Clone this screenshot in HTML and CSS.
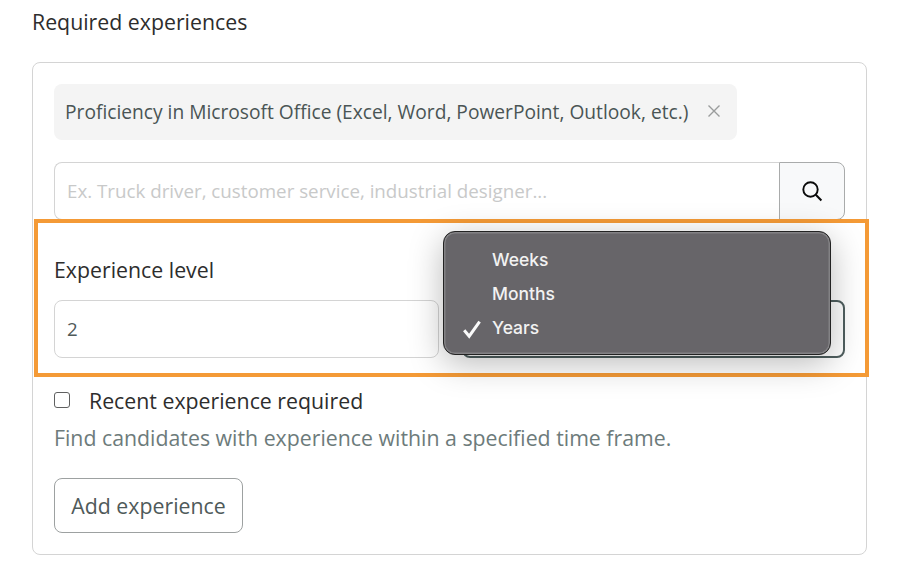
FILE: index.html
```html
<!DOCTYPE html>
<html lang="en">
<head>
<meta charset="utf-8">
<title>Required experiences</title>
<link rel="stylesheet" href="styles.css">
</head>
<body>
<main class="page">
  <h2 class="title">Required experiences</h2>
  <section class="card">
    <div class="highlight"></div>
    <div class="chip">
      <span class="chip-text">Proficiency in Microsoft Office (Excel, Word, PowerPoint, Outlook, etc.)</span>
      <svg class="chip-x" width="14" height="14" viewBox="0 0 14 14"><path d="M1.5 1.5l11 11M12.5 1.5l-11 11" fill="none" stroke="#9a9c9c" stroke-width="1.4"/></svg>
    </div>
    <div class="search">
      <div class="search-input">Ex. Truck driver, customer service, industrial designer...</div>
      <div class="search-btn">
        <svg width="24" height="24" viewBox="0 0 24 24"><circle cx="10.5" cy="10.5" r="7.2" fill="none" stroke="#0b0b0b" stroke-width="1.9"/><path d="M15.8 15.8l5.6 5.6" fill="none" stroke="#0b0b0b" stroke-width="2.1"/></svg>
      </div>
    </div>
    <div class="level-label">Experience level</div>
    <div class="level-row">
      <div class="level-input">2</div>
      <div class="level-select"></div>
      <div class="menu">
        <div class="menu-item">Weeks</div>
        <div class="menu-item">Months</div>
        <div class="menu-item">
          <svg class="menu-check" width="20" height="20" viewBox="0 0 20 20"><path d="M2.2 11.2l5 6L17.6 2.6" fill="none" stroke="#fafafa" stroke-width="3"/></svg>
          Years
        </div>
      </div>
    </div>
    <label class="recent">
      <span class="checkbox"></span>
      <span>Recent experience required</span>
    </label>
    <p class="help">Find candidates with experience within a specified time frame.</p>
    <div class="add-btn">Add experience</div>
  </section>
</main>
</body>
</html>
```
FILE: styles.css
```css
* { box-sizing: border-box; }
html, body { margin: 0; padding: 0; }
body {
  background: #fff;
  font-family: "Open Sans", "Liberation Sans", sans-serif;
  width: 916px;
  height: 576px;
  overflow: hidden;
}
.page { padding: 8px 49px 0 32px; }
.title {
  margin: 0 0 26px;
  font-size: 21.3px;
  line-height: 28px;
  font-weight: 400;
  color: #2d2d2d;
}
.card {
  position: relative;
  height: 493px;
  border: 1px solid #d4d4d4;
  border-radius: 8px;
  padding: 21px;
}
.highlight {
  position: absolute;
  left: 1px;
  top: 156px;
  width: 835px;
  height: 158px;
  border: 4px solid #f49a36;
  z-index: 1;
  pointer-events: none;
}
.chip {
  display: inline-flex;
  align-items: center;
  height: 56px;
  width: 683px;
  padding: 0 16px 2px 11px;
  justify-content: space-between;
  background: #f4f4f4;
  border-radius: 8px;
}
.chip-text {
  font-size: 19.2px;
  font-weight: 500;
  color: #4a5555;
  white-space: nowrap;
}
.chip-x { flex: none; }
.search {
  display: flex;
  height: 58px;
  margin-top: 22px;
}
.search-input {
  flex: 1;
  display: flex;
  align-items: center;
  padding: 0 0 2px 12px;
  border: 1px solid #d4d4d4;
  border-right: 0;
  border-radius: 8px 0 0 8px;
  font-size: 18.75px;
  color: #c8c9c9;
}
.search-btn {
  width: 66px;
  display: flex;
  align-items: center;
  justify-content: center;
  background: #f8f9fa;
  border: 1px solid #a9abab;
  border-radius: 0 8px 8px 0;
}
.level-label {
  margin-top: 36px;
  font-size: 21.3px;
  line-height: 28px;
  color: #2d2d2d;
}
.level-row {
  position: relative;
  display: flex;
  gap: 23px;
  margin-top: 16px;
  height: 58px;
}
.level-input {
  width: 385px;
  display: flex;
  align-items: center;
  padding: 0 0 2px 12px;
  border: 1px solid #d4d4d4;
  border-radius: 8px;
  font-size: 18.7px;
  font-weight: 500;
  color: #4f5a5a;
}
.level-select {
  flex: 1;
  border: 2px solid #4f5f5f;
  border-radius: 8px;
}
.menu {
  position: absolute;
  left: 389px;
  top: -69px;
  width: 388px;
  height: 124px;
  padding: 11px 0 0 48px;
  background: #676569;
  border: 1px solid #232323;
  border-radius: 12px;
  box-shadow: inset 0 0 0 1.5px #838285, 0 8px 34px rgba(0, 0, 0, 0.28);
  font-family: Inter, "Liberation Sans", sans-serif;
  font-size: 17.5px;
  font-weight: 500;
  color: #f2f2f2;
  z-index: 2;
}
.menu-item {
  position: relative;
  height: 34px;
  line-height: 34px;
}
.menu-check {
  position: absolute;
  left: -30px;
  top: 8px;
}
.recent {
  display: flex;
  align-items: center;
  margin-top: 29px;
  font-size: 21.3px;
  line-height: 28px;
  color: #2d2d2d;
}
.checkbox {
  width: 16px;
  height: 16px;
  margin-right: 19px;
  margin-top: -3px;
  border: 1.5px solid #5f6060;
  border-radius: 3px;
}
.help {
  margin: 9px 0 0;
  font-size: 21.3px;
  line-height: 28px;
  color: #6d7b7b;
}
.add-btn {
  display: flex;
  align-items: center;
  justify-content: center;
  width: 189px;
  height: 55px;
  margin-top: 26px;
  border: 1px solid #9da1a1;
  border-radius: 8px;
  font-size: 21.3px;
  color: #4f5a5a;
}
```
